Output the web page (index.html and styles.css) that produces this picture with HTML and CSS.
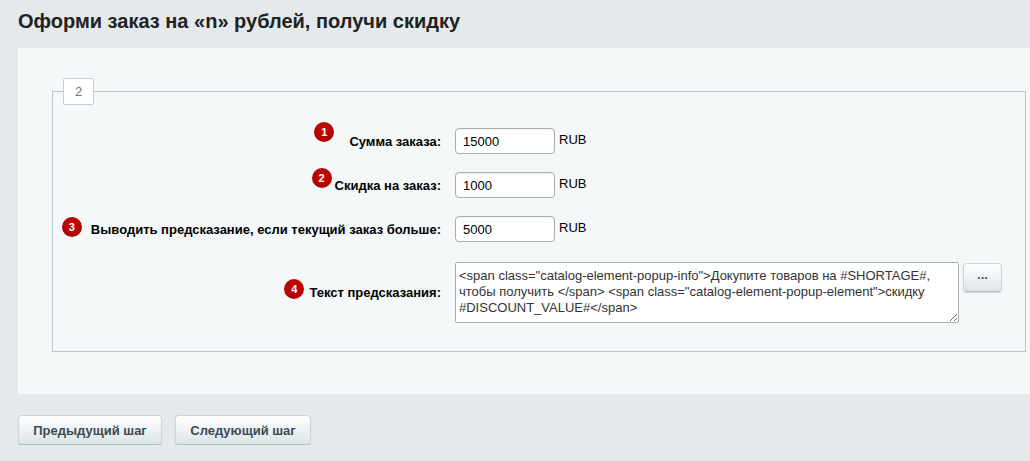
FILE: index.html
```html
<!DOCTYPE html>
<html lang="ru">
<head>
<meta charset="utf-8">
<title>Оформи заказ</title>
<link rel="stylesheet" href="styles.css">
</head>
<body>
<h1 class="title">Оформи заказ на «n» рублей, получи скидку</h1>
<div class="panel">
  <fieldset class="group">
    <legend class="group-legend"><span class="legend-box">2</span></legend>
    <div class="row">
      <div class="label-cell"><span class="label">Сумма заказа:<span class="badge b1">1</span></span></div>
      <div class="field-cell"><input class="inp" type="text" value="15000"><span class="unit">RUB</span></div>
    </div>
    <div class="row">
      <div class="label-cell"><span class="label">Скидка на заказ:<span class="badge b2">2</span></span></div>
      <div class="field-cell"><input class="inp" type="text" value="1000"><span class="unit">RUB</span></div>
    </div>
    <div class="row">
      <div class="label-cell"><span class="label">Выводить предсказание, если текущий заказ больше:<span class="badge b3">3</span></span></div>
      <div class="field-cell"><input class="inp" type="text" value="5000"><span class="unit">RUB</span></div>
    </div>
    <div class="row row-text">
      <div class="label-cell"><span class="label">Текст предсказания:<span class="badge b4">4</span></span></div>
      <div class="field-cell top"><textarea class="txt">&lt;span class="catalog-element-popup-info"&gt;Докупите товаров на #SHORTAGE#, чтобы получить &lt;/span&gt; &lt;span class="catalog-element-popup-element"&gt;скидку #DISCOUNT_VALUE#&lt;/span&gt;</textarea><button class="dots" type="button">...</button></div>
    </div>
  </fieldset>
</div>
<div class="actions">
  <button class="btn btn-prev" type="button">Предыдущий шаг</button>
  <button class="btn btn-next" type="button">Следующий шаг</button>
</div>
</body>
</html>
```
FILE: styles.css
```css
html, body {
  margin: 0;
  padding: 0;
}
body {
  background: #e4eaec;
  font-family: "Liberation Sans", Arial, sans-serif;
  font-size: 13px;
  color: #000;
  overflow: hidden;
}
.title {
  margin: 0 0 15px 18px;
  padding-top: 9px;
  font-size: 20px;
  line-height: 24px;
  font-weight: bold;
  color: #222;
}
.panel {
  margin-left: 18px;
  background: #f5f8f9;
  padding: 30px 4px 42px 34px;
}
.group {
  margin: 0;
  border: 1px solid #bac8cc;
  padding: 23px 0 28px 0;
  min-width: 0;
}
.group-legend {
  margin-left: 10px;
  padding: 0;
  text-align: left;
}
.legend-box {
  display: block;
  width: 29px;
  height: 25px;
  line-height: 25px;
  text-align: center;
  background: #fff;
  border: 1px solid #c3ced2;
  border-radius: 2px;
  color: #5a7585;
  font-size: 13px;
}
.row {
  display: grid;
  grid-template-columns: 402px auto;
  align-items: center;
  margin-bottom: 18px;
}
.row-text {
  margin-top: 20px;
  margin-bottom: 0;
}
.label-cell {
  text-align: right;
  padding-right: 14px;
}
.label {
  position: relative;
  font-weight: bold;
  color: #000;
}
.field-cell {
  display: flex;
  align-items: center;
}
.field-cell.top {
  align-items: flex-start;
}
.inp {
  box-sizing: border-box;
  width: 100px;
  height: 26px;
  margin: 0;
  padding: 0 7px;
  border: 1px solid #a9aeb2;
  border-radius: 4px;
  background: #fff;
  font-family: "Liberation Sans", Arial, sans-serif;
  font-size: 13px;
  color: #000;
  box-shadow: inset 0 1px 1px rgba(0,0,0,0.06);
}
.unit {
  margin-left: 4px;
  margin-top: -3px;
}
.txt {
  box-sizing: border-box;
  width: 504px;
  height: 61px;
  margin: 0;
  padding: 5px 3px;
  border: 1px solid #a9aeb2;
  border-radius: 2px;
  background: #fff;
  font-family: "Liberation Sans", Arial, sans-serif;
  font-size: 13px;
  line-height: 16px;
  color: #333;
  overflow: hidden;
}
.dots {
  box-sizing: border-box;
  margin: 1px 0 0 4px;
  width: 39px;
  height: 29px;
  padding: 0 0 6px 0;
  border: 1px solid #cdd5d8;
  border-bottom-color: #b7c1c5;
  border-radius: 4px;
  background: linear-gradient(#ffffff, #dfe6e8);
  box-shadow: 0 1px 1px rgba(0,0,0,0.15);
  font-family: "Liberation Sans", Arial, sans-serif;
  font-size: 13px;
  font-weight: bold;
  color: #4a5962;
}
.badge {
  position: absolute;
  width: 20px;
  height: 20px;
  border-radius: 50%;
  background: radial-gradient(circle at 50% 35%, #c40a0a, #a80000);
  color: #fff;
  font-size: 11px;
  font-weight: bold;
  line-height: 20px;
  text-align: center;
}
.b1 { right: calc(100% + 15px); top: -12px; }
.b2 { right: calc(100% + 3px); top: -10px; }
.b3 { right: calc(100% + 9px); top: -5px; }
.b4 { right: calc(100% + 5px); top: -6px; }
.actions {
  display: flex;
  gap: 13px;
  margin: 21px 0 0 18px;
}
.btn {
  box-sizing: border-box;
  height: 30px;
  padding: 0 14px;
  border: 1px solid #cdd5d8;
  border-bottom-color: #b3bec2;
  border-radius: 4px;
  background: linear-gradient(#ffffff, #dce4e6);
  box-shadow: 0 1px 1px rgba(0,0,0,0.18);
  font-family: "Liberation Sans", Arial, sans-serif;
  font-size: 13px;
  font-weight: bold;
  color: #3d4a53;
}
.btn-prev { width: 144px; }
.btn-next { width: 136px; }
```
